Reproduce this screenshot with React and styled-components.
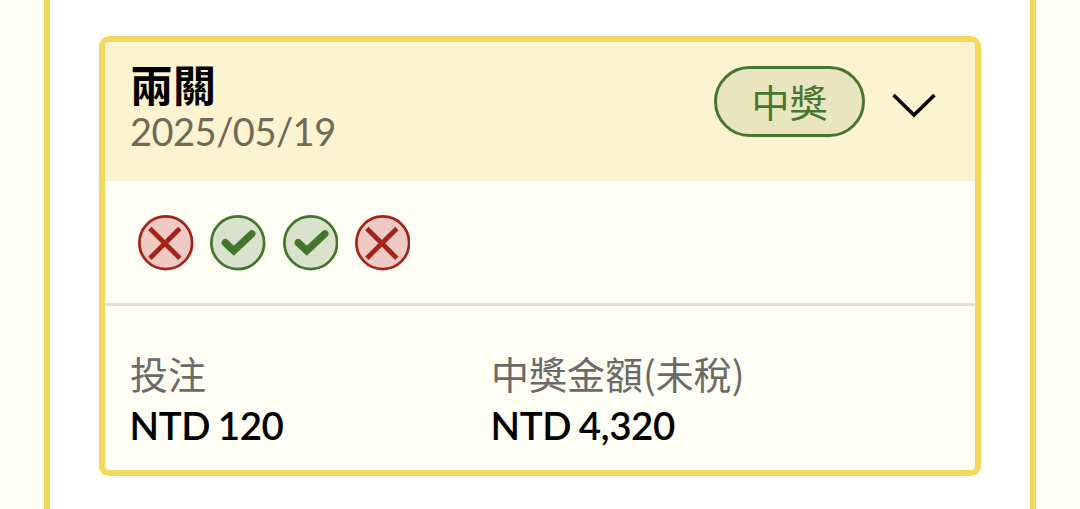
import { useState } from "react";
import styled, { createGlobalStyle } from "styled-components";

const GlobalStyle = createGlobalStyle`
  * {
    box-sizing: border-box;
  }
  body {
    margin: 0;
    overflow: hidden;
    background: #fffef5;
    font-family: Lato, "Noto Sans CJK TC", sans-serif;
  }
`;

const Container = styled.div`
  height: 509px;
  padding: 0 44px;
`;

const Wrapper = styled.div`
  height: 100%;
  padding: 36px 49px 0;
  background-color: white;
  border: solid #f2d95c;
  border-width: 0 6px;
`;

const Card = styled.div`
  height: 440px;
  border: 6px solid #f2d95c;
  border-radius: 10px;
  background-color: #fffef5;
  overflow: hidden;
`;

const Header = styled.div`
  display: flex;
  justify-content: space-between;
  height: 139px;
  padding: 20px 38px 0 25px;
  background-color: #fcf3d0;
`;

const Title = styled.h2`
  margin: 0;
  font-size: 43px;
  line-height: 48px;
  font-weight: 700;
`;

const DateText = styled.div`
  font-size: 38px;
  line-height: 43px;
  letter-spacing: -0.5px;
  color: #6f6a56;
`;

const HeaderRight = styled.div`
  display: flex;
  gap: 26px;
  padding-top: 4px;
`;

const Badge = styled.span`
  width: 151px;
  height: 71px;
  border: 3px solid #47762f;
  border-radius: 36px;
  background-color: #e9e5bf;
  color: #47762f;
  font-size: 38px;
  line-height: 67px;
  text-align: center;
`;

const Toggle = styled.button`
  width: 46px;
  height: 71px;
  padding: 11px 0 0;
  border: none;
  background: none;
  cursor: pointer;
`;

const Results = styled.div`
  display: flex;
  gap: 16.8px;
  height: 125px;
  padding: 34px 33px 0;
  border-bottom: 3px solid #e1e0da;
`;

const Mark = styled.svg`
  display: block;
  width: 55.5px;
  height: 55.5px;
  color: ${(props) => (props.$hit ? "#43752c" : "#a5221a")};
`;

const Footer = styled.div`
  display: grid;
  grid-template-columns: 361px 1fr;
  padding: 43px 25px 0;
`;

const Label = styled.div`
  font-family: "Noto Sans CJK TC", sans-serif;
  font-size: 38px;
  line-height: 48px;
  color: #6b6a66;
`;

const Amount = styled.div`
  margin-left: -0.5px;
  font-size: 38.5px;
  line-height: 57px;
  font-weight: 600;
  letter-spacing: -0.4px;
  word-spacing: -1.5px;
`;

const results = [false, true, true, false];

const ResultMark = ({ hit }) => (
  <Mark $hit={hit} viewBox="0 0 56 56" fill="none" stroke="currentColor">
    <circle cx="28" cy="28" r="26.6" strokeWidth="2.8" fill={hit ? "#d9e2cc" : "#efcac5"} />
    {hit ? (
      <path d="M15.4 28 L24 36 L42.2 19" strokeWidth="7.4" strokeLinecap="round" />
    ) : (
      <path d="M12 13.6 L42.2 43.6 M42.2 13.6 L12 43.6" strokeWidth="4.8" />
    )}
  </Mark>
);

const App = () => {
  const [open, setopen] = useState(true);

  return (
    <>
      <GlobalStyle />
      <Container>
        <Wrapper>
          <Card>
            <Header>
              <div>
                <Title>兩關</Title>
                <DateText>2025/05/19</DateText>
              </div>
              <HeaderRight>
                <Badge>中獎</Badge>
                <Toggle onClick={() => setopen(!open)}>
                  <svg width="46" height="26" viewBox="0 0 46 26" fill="none" stroke="black" strokeWidth="3.6">
                    <path d="M2.5 2 L23 22 L43.5 2" />
                  </svg>
                </Toggle>
              </HeaderRight>
            </Header>
            {open && (
              <>
                <Results>
                  {results.map((hit, i) => (
                    <ResultMark key={i} hit={hit} />
                  ))}
                </Results>
                <Footer>
                  <div>
                    <Label>投注</Label>
                    <Amount>NTD 120</Amount>
                  </div>
                  <div>
                    <Label>中獎金額(未稅)</Label>
                    <Amount>NTD 4,320</Amount>
                  </div>
                </Footer>
              </>
            )}
          </Card>
        </Wrapper>
      </Container>
    </>
  );
};

export default App;
